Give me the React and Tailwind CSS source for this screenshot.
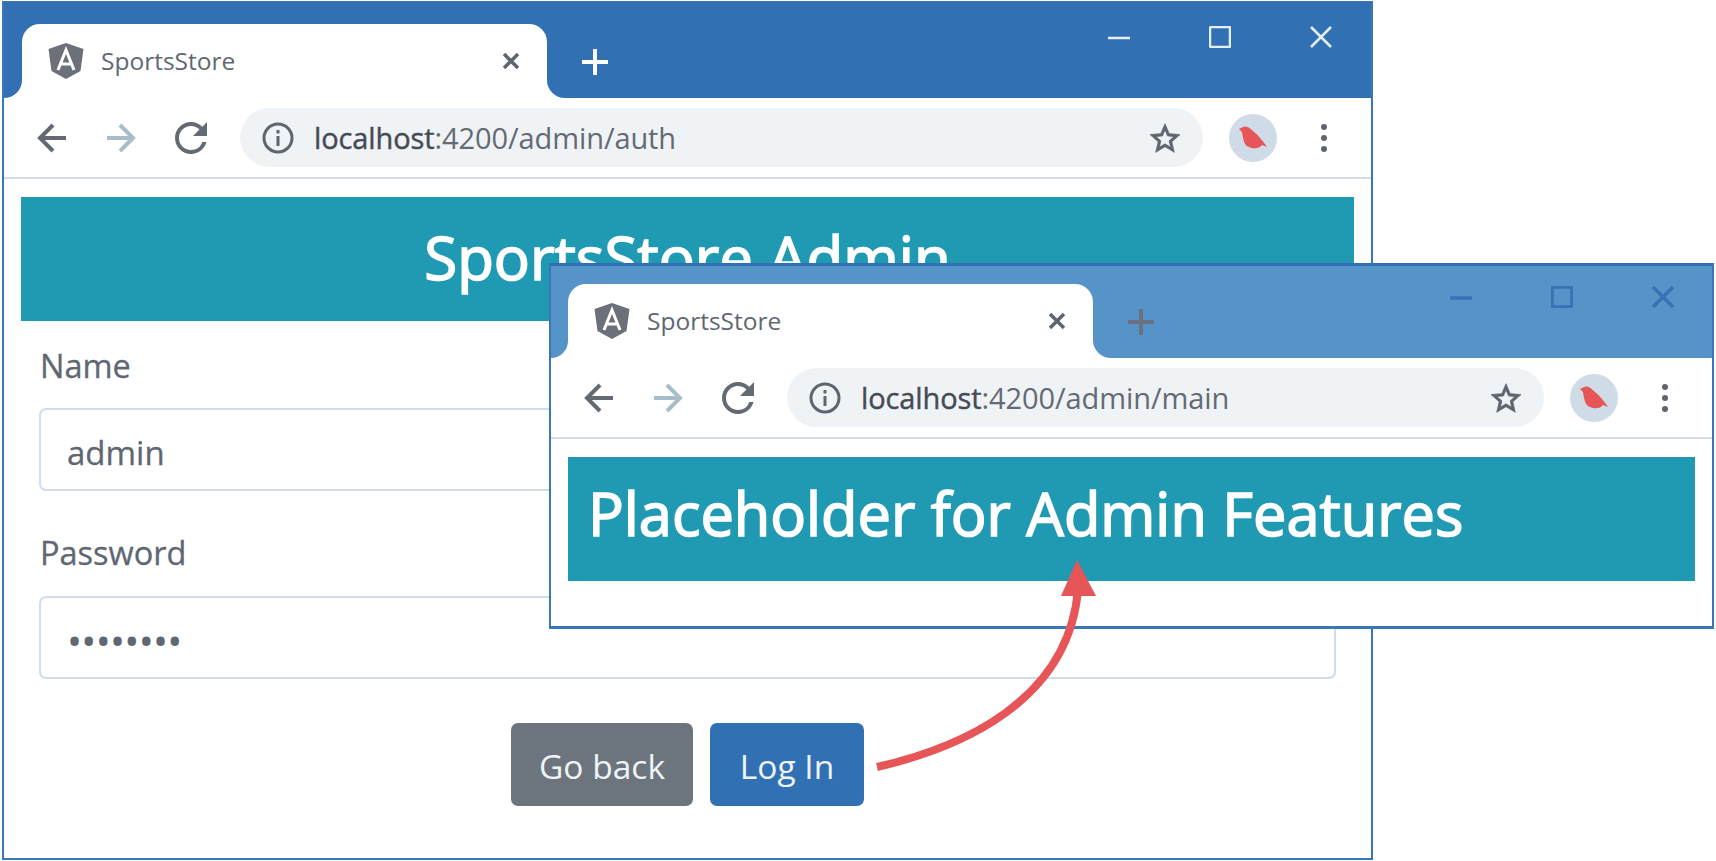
const SANS = { fontFamily: '"Open Sans", "Noto Sans", sans-serif' };

function Shield() {
  return (
    <svg width="36" height="36" viewBox="0 0 36 36" className="shrink-0">
      <polygon points="18,0 35.5,6 32.5,28 18,36 3.5,28 0.5,6" fill="#6b7079" />
      <path d="M10 27 L18 7 L26 27 M13 21 H23" fill="none" stroke="#fff" strokeWidth="3" />
    </svg>
  );
}

function Back({ color, flip }) {
  return (
    <svg width="30" height="32" viewBox="0 0 30 32" className={flip ? "shrink-0 -scale-x-100" : "shrink-0"}>
      <path d="M29 16 H4 M16 3 L3 16 L16 29" fill="none" stroke={color} strokeWidth="4" />
    </svg>
  );
}

function Reload() {
  return (
    <svg width="32" height="32" viewBox="4 4 16 16" className="shrink-0">
      <path fill="#646a73" d="M17.65 6.35A7.958 7.958 0 0 0 12 4c-4.42 0-7.99 3.58-7.99 8s3.57 8 7.99 8c3.73 0 6.84-2.55 7.73-6h-2.08A5.99 5.99 0 0 1 12 18c-3.31 0-6-2.69-6-6s2.69-6 6-6c1.66 0 3.14.69 4.22 1.78L13 11h7V4l-2.35 2.35z" />
    </svg>
  );
}

function Info() {
  return (
    <svg width="32" height="32" viewBox="0 0 32 32" className="shrink-0">
      <circle cx="16" cy="16" r="14" fill="none" stroke="#5f656e" strokeWidth="3" />
      <rect x="14.5" y="14" width="3" height="10" fill="#5f656e" />
      <rect x="14.5" y="8" width="3" height="3.5" fill="#5f656e" />
    </svg>
  );
}

function Star() {
  return (
    <svg width="30" height="30" viewBox="2 2 20 19" className="shrink-0">
      <path fill="#5f656e" stroke="#5f656e" strokeWidth="0.5" d="M22 9.24l-7.19-.62L12 2 9.19 8.63 2 9.24l5.46 4.73L5.82 21 12 17.27 18.18 21l-1.63-7.03L22 9.24zM12 15.4l-3.76 2.27 1-4.28-3.32-2.88 4.38-.38L12 6.1l1.71 4.04 4.38.38-3.32 2.88 1 4.28L12 15.4z" />
    </svg>
  );
}

function Avatar() {
  return (
    <div className="flex h-[48px] w-[48px] shrink-0 items-center justify-center rounded-full bg-[#cfdbe6]">
      <svg width="48" height="48" viewBox="0 0 48 48">
        <path fill="#e65557" d="M10 15 L14 13 C18 11 22 15 25 18 C29 21 34 27 38 33 L33 31 C30 35 24 35 20 33 C15 32 14 24 13 18 Z" />
      </svg>
    </div>
  );
}

function Dots() {
  return (
    <div className="flex w-[94px] shrink-0 flex-col items-center gap-[5px]">
      <div className="h-[6px] w-[6px] rounded-full bg-[#5f656e]" />
      <div className="h-[6px] w-[6px] rounded-full bg-[#5f656e]" />
      <div className="h-[6px] w-[6px] rounded-full bg-[#5f656e]" />
    </div>
  );
}

function Close({ color }) {
  return (
    <svg width="18" height="18" viewBox="0 0 18 18" className="shrink-0">
      <path d="M2 2 L16 16 M16 2 L2 16" stroke={color} strokeWidth="3.5" />
    </svg>
  );
}

function Controls({ color, width }) {
  return (
    <div className="flex gap-[79px]">
      <svg width="22" height="22" viewBox="0 0 22 22">
        <path d="M0 12 H22" stroke={color} strokeWidth={width} />
      </svg>
      <svg width="22" height="22" viewBox="0 0 22 22">
        <rect x="1" y="1" width="20" height="20" rx="1" fill="none" stroke={color} strokeWidth={width} />
      </svg>
      <svg width="22" height="22" viewBox="0 0 22 22">
        <path d="M1 1 L21 21 M21 1 L1 21" stroke={color} strokeWidth={width} />
      </svg>
    </div>
  );
}

function Chrome({ url, bar, barClass, leftClass, tabClass, plusClass, plusColor, ctrlClass, ctrlColor, ctrlWidth }) {
  return (
    <div style={SANS}>
      <div className={`flex bg-white ${barClass}`}>
        <div className={`${leftClass} h-full shrink-0 rounded-br-[18px]`} style={{ backgroundColor: bar }} />
        <div className="h-full w-[525px] shrink-0" style={{ backgroundColor: bar }}>
          <div className={`flex h-[74px] items-center rounded-t-[18px] bg-white pl-[26px] pr-[27px] ${tabClass}`}>
            <Shield />
            <span className="ml-[17px] flex-1 text-[24.5px] text-[#5f6773]">SportsStore</span>
            <Close color="#5f656e" />
          </div>
        </div>
        <div className="flex h-full flex-1 items-start rounded-bl-[18px]" style={{ backgroundColor: bar }}>
          <svg width="28" height="28" viewBox="0 0 28 28" className={plusClass}>
            <path d="M14 1 V27 M1 14 H27" stroke={plusColor} strokeWidth="4" />
          </svg>
          <div className="flex-1" />
          <div className={ctrlClass}>
            <Controls color={ctrlColor} width={ctrlWidth} />
          </div>
        </div>
      </div>
      <div className="flex h-[81px] items-center border-b-2 border-[#d0dce8] pl-[33px]">
        <Back color="#646a73" />
        <div className="ml-[39px]"><Back color="#a8bdca" flip /></div>
        <div className="ml-[39px]"><Reload /></div>
        <div className="ml-[33px] flex h-[59px] flex-1 items-center rounded-full bg-[#f0f3f6] pl-[22px] pr-[23px]">
          <Info />
          <span className="ml-[20px] flex-1 text-[29px] tracking-[-0.1px] text-[#646a73]">
            <span className="text-[#454b54] [-webkit-text-stroke:0.4px_#454b54]">localhost</span>{url}
          </span>
          <Star />
        </div>
        <div className="ml-[26px]"><Avatar /></div>
        <Dots />
      </div>
    </div>
  );
}

export default function App() {
  return (
    <div className="relative h-[861px] w-[1716px] overflow-hidden bg-white">
      {/* Back window */}
      <div className="absolute left-[2px] top-[1px] flex h-[859px] w-[1371px] flex-col border-x-2 border-b-2 border-t border-[#3a77b8] bg-white">
        <Chrome
          url=":4200/admin/auth"
          bar="#3270b4"
          barClass="h-[96px]"
          leftClass="w-[18px]"
          tabClass="mt-[22px]"
          plusClass="ml-[34px] mt-[46px]"
          plusColor="#ffffff"
          ctrlClass="mr-[39px] mt-[24px]"
          ctrlColor="#e6eef5"
          ctrlWidth="2.5"
        />
        <div className="flex flex-1 flex-col px-[17px] pt-[18px]" style={SANS}>
          <div className="flex h-[124px] items-center justify-center bg-[#209ab2] pb-[5px] text-[60px] text-white [-webkit-text-stroke:1.6px_white]">
            SportsStore Admin
          </div>
          <div className="flex flex-col px-[18px] text-[#5f6773]">
            <div className="mt-[25px] h-[40px] pl-[1px] text-[32.5px] leading-[40px] [-webkit-text-stroke:0.3px_#5f6773]">Name</div>
            <div className="mt-[22px] flex h-[83px] items-center rounded-[7px] border-2 border-[#d0dce8] pl-[26px] pt-[6px] text-[33px] [-webkit-text-stroke:0.3px_#5f6773]">admin</div>
            <div className="mt-[42px] h-[40px] pl-[1px] text-[32.5px] leading-[40px] [-webkit-text-stroke:0.3px_#5f6773]">Password</div>
            <div className="mt-[23px] flex h-[83px] items-center rounded-[7px] border-2 border-[#d0dce8] pl-[26px] pt-[6px] text-[40px]">
              <span className="tracking-[-0.7px]">••••••••</span>
            </div>
            <div className="mt-[44px] flex justify-center gap-[17px]">
              <div className="flex h-[83px] w-[182px] items-center justify-center rounded-[7px] bg-[#6c757d] pt-[3px] text-[33.5px] text-[#eef3f7]">Go back</div>
              <div className="flex h-[83px] w-[154px] items-center justify-center rounded-[7px] bg-[#3270b4] pt-[3px] text-[33.5px] text-[#eef3f7]">Log In</div>
            </div>
          </div>
        </div>
      </div>

      {/* Front window */}
      <div className="absolute left-[549px] top-[263px] flex h-[366px] w-[1165px] flex-col border-x-2 border-b-[3px] border-t-[3px] border-x-[#3a77b8] border-b-[#3a77b8] border-t-[#3270b4] bg-white">
        <Chrome
          url=":4200/admin/main"
          bar="#5593c8"
          barClass="h-[92px]"
          leftClass="w-[17px]"
          tabClass="mt-[18px]"
          plusClass="ml-[34px] mt-[42px]"
          plusColor="#6a7280"
          ctrlClass="mr-[38px] mt-[20px]"
          ctrlColor="#3a72b5"
          ctrlWidth="3.5"
        />
        <div className="flex-1 px-[17px] pt-[18px]" style={SANS}>
          <div className="flex h-[124px] items-center bg-[#209ab2] pb-[12px] pl-[20px] text-[59.5px] text-white [-webkit-text-stroke:1.6px_white]">
            Placeholder for Admin Features
          </div>
        </div>
      </div>

      {/* Arrow between the windows */}
      <svg className="absolute left-0 top-0" width="1716" height="861" viewBox="0 0 1716 861">
        <path d="M877 767 C960 748 1068 702 1078 590" fill="none" stroke="#e65557" strokeWidth="8" />
        <polygon points="1077,560 1096,596 1061,596" fill="#e65557" />
      </svg>
    </div>
  );
}
